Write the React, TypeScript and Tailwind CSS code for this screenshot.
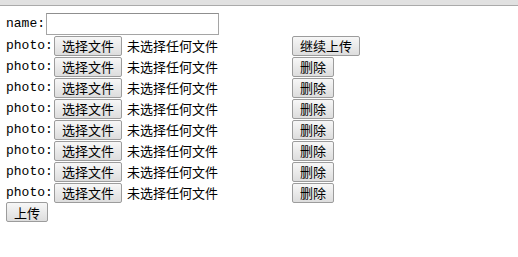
import React from 'react';

const mono = "font-['Liberation_Mono','Noto_Sans_CJK_SC',monospace]";
const cjk = "font-['Noto_Sans_CJK_SC','Liberation_Sans',sans-serif]";

const Btn: React.FC<{ label: string; w: string }> = ({ label, w }) => (
  <button
    className={`${cjk} ${w} h-[20px] flex items-center justify-center text-[13px] leading-none text-black border border-[#9c9c9c] rounded-[2px] bg-gradient-to-b from-[#f7f7f7] to-[#dddddd]`}
  >
    {label}
  </button>
);

export default function App() {
  const rows = Array.from({ length: 8 }, (_, i) => i);

  return (
    <div className="w-[518px] h-[257px] bg-white text-black">
      {/* window chrome */}
      <div className="h-[6px] bg-[#e1e1e1] border-b border-[#aaaaaa]" />

      <div className="px-[6px] pt-[6px]">
        {/* name */}
        <div className="flex items-center h-[23px]">
          <span className={`${mono} text-[13px] w-[40px]`}>name:</span>
          <input className="w-[173px] h-[22px] border border-[#a5a5a5] border-t-[#8f8f8f] bg-white outline-none" />
        </div>

        {/* photos */}
        {rows.map((i) => (
          <div key={i} className="flex items-center h-[21px]">
            <span className={`${mono} text-[13px] w-[48px]`}>photo:</span>
            <Btn label="选择文件" w="w-[68px]" />
            <span className={`${cjk} text-[13px] ml-[5px] w-[165px]`}>未选择任何文件</span>
            {i === 0 ? <Btn label="继续上传" w="w-[68px]" /> : <Btn label="删除" w="w-[42px]" />}
          </div>
        ))}

        <div className="-mt-[1px]">
          <Btn label="上传" w="w-[42px]" />
        </div>
      </div>
    </div>
  );
}
